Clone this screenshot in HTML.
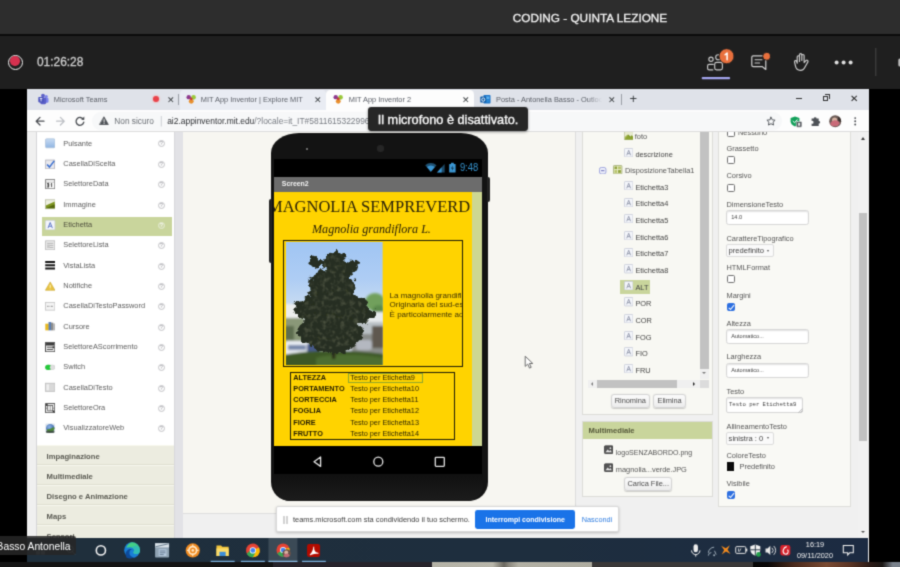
<!DOCTYPE html>
<html>
<head>
<meta charset="utf-8">
<title>Teams - CODING - QUINTA LEZIONE</title>
<style>
*{box-sizing:border-box;margin:0;padding:0}
html,body{width:900px;height:567px;overflow:hidden;background:#000}
body{font-family:"Liberation Sans",sans-serif;position:relative;color:#444}
.a{position:absolute}
#stage{position:absolute;left:0;top:0;width:900px;height:567px;overflow:hidden;background:#000;filter:url(#soft)}
/* ---------- Teams chrome ---------- */
#tb1{left:0;top:0;width:900px;height:34.5px;background:#2d2d2d}
#tb1 .ttl{left:512px;top:11px;width:156px;text-align:center;font-size:11.8px;line-height:15px;color:#f4f4f4;white-space:nowrap;letter-spacing:0;-webkit-text-stroke:0.3px #f4f4f4}
#tbl{left:0;top:34.4px;width:900px;height:1.7px;background:#0b0b0b}
#tb2{left:0;top:36px;width:900px;height:53px;background:#1f1f1f}
#rec{left:8.4px;top:54.6px;width:15px;height:15px;border-radius:50%;border:1.9px solid #f1f1f1;background:#1f1f1f}
#rec i{position:absolute;left:0.9px;top:0.9px;width:9.4px;height:9.4px;border-radius:50%;background:#d6314f}
#tim{left:37px;top:55px;font-size:11.9px;line-height:15px;color:#cdcdcd;white-space:nowrap;-webkit-text-stroke:0.3px #cdcdcd}
/* ---------- Shared screen ---------- */
#scr{left:27px;top:89px;width:841.6px;height:473px;background:#f1f1f1;overflow:hidden}
#tabs{left:0;top:0;width:842px;height:21px;background:#dfe2e9}
#tool{left:0;top:21px;width:842px;height:22px;background:#fdfdfd;border-bottom:1px solid #dcdcdc}
.tabtx{font-size:7.4px;line-height:10px;color:#5a5e66;white-space:nowrap;top:5.8px}
.tabx{font-size:9px;line-height:10px;color:#3c4043;top:5.6px}
#page{left:0;top:43px;width:842px;height:406px;background:#f0f0f0;overflow:hidden}
/* palette */
#pal{left:9px;top:-2px;width:139px;height:420px;background:#fff;border-left:1.5px solid #d5d5d8;border-right:1px solid #d8d8dc}
.pi{position:absolute;left:0;width:137px;height:19.1px}
.pi .tx{position:absolute;left:26.3px;top:2.7px;font-size:7.4px;line-height:10px;color:#5c5c5c;white-space:nowrap}
.pi .ic{position:absolute;left:8px;top:2.4px;width:10.4px;height:10.4px}
.pi .q{position:absolute;left:121px;top:4.6px;width:7px;height:7px;border-radius:50%;border:0.8px solid #c4c4c8;font-size:5px;line-height:5.6px;text-align:center;color:#9a9aa0;background:#fbfbfb}
.pi.sel{background:#c9d59c;left:5.2px;width:129.6px}
.pi.sel .tx{left:21.1px;color:#4d4d3c}.pi.sel .ic{left:3.3px}.pi.sel .q{left:115.8px;border-color:#e4ead0;color:#fff;background:#cfd9aa}
.ph{position:absolute;left:0;width:137px;height:20px;overflow:hidden;background:#ecece0;border-top:1px solid #f7f7ee;border-bottom:1px solid #dfdfd0;font-size:7.65px;font-weight:bold;color:#5a5a52;line-height:21px;padding-left:9.6px;white-space:nowrap}
/* viewer */
#gut{left:148px;top:0;width:8px;height:420px;background:#e2e2e6}
#view{left:156px;top:-2px;width:393px;height:384px;background:#f7f6f1;border-right:1px solid #dcdcdc;border-bottom:1px solid #dedede}

/* phone */
#ph{left:88px;top:2.8px;width:217.3px;height:368.4px;background:#131313;border-radius:28px 27px 19px 19px / 20px 20px 19px 19px}
#ph .sb{position:absolute;background:#222}
#phs{left:91px;top:29px;width:207.7px;height:315px;background:#000;overflow:hidden}
#phs .tbar{left:0;top:18px;width:208.5px;height:14.6px;background:#6c6c6c}
#phs .tbar span{position:absolute;left:7.8px;top:2.4px;font-size:6.9px;line-height:10px;font-weight:bold;color:#f4f4f4}
#ycl{left:0;top:32.6px;width:198px;height:254.4px;background:#ffd300;overflow:hidden}
#gst{left:198px;top:32.6px;width:9.7px;height:254.4px;background:#cdd792}
.ser{font-family:"Liberation Serif",serif;color:#2a2208;white-space:nowrap}
.ptx{font-size:8px;line-height:9.4px;color:#3e3304;white-space:nowrap}
.tl{position:absolute;font-size:7.32px;line-height:10px;color:#2e2603;white-space:nowrap;margin-top:0.5px}
.tl.b{font-weight:bold;color:#241d02}

/* right panels */
#cmp{left:555px;top:-2px;width:131px;height:284.5px;background:#f8f8f3;border:1px solid #dcdcd8;border-top:none;overflow:hidden}
.ti{position:absolute;margin-top:0.4px;font-size:7.4px;line-height:10px;color:#555;white-space:nowrap}
.tic{position:absolute;width:9.4px;height:9.4px}
.btn{position:absolute;height:14.4px;border:1px solid #d4d4d4;border-radius:3px;background:linear-gradient(#fbfbfb,#ececec);font-size:7.4px;line-height:12.4px;text-align:center;color:#4a4a4a;box-shadow:0 0.5px 1px rgba(0,0,0,.18)}
#med{left:555px;top:288.5px;width:131px;height:76px;background:#f8f8f3;border:1px solid #dcdcd8}
#med .hd{position:absolute;left:0;top:0;width:129px;height:17.6px;background:#c9d59c;font-size:7.6px;font-weight:bold;line-height:17px;padding-left:5.6px;color:#55583a}
#prp{left:691px;top:-2px;width:133px;height:377px;background:#f9f9f5;border:1px solid #dededa;border-top:none;overflow:hidden}
.pl{position:absolute;left:7.5px;margin-top:0.7px;font-size:7.4px;line-height:10px;color:#555;white-space:nowrap}
.cb{position:absolute;left:7.6px;width:8.4px;height:8.4px;border:1px solid #6f6f6f;border-radius:1.6px;background:#fff}
.cb.on{background:#2d6fe0;border-color:#2d6fe0}
.cb.on:after{content:"";position:absolute;left:2.2px;top:0.2px;width:2.4px;height:4.6px;border:solid #fff;border-width:0 1.2px 1.2px 0;transform:rotate(40deg)}
.tb{position:absolute;left:6.6px;width:83.6px;height:15px;border:1px solid #d6d6d6;border-radius:2.6px;background:#fff;box-shadow:inset 0 1px 1.5px rgba(0,0,0,.12);font-size:5.6px;line-height:13px;padding-left:4.6px;color:#444;white-space:nowrap;overflow:hidden}
.sl{position:absolute;left:6.6px;width:48px;height:13.2px;border:1px solid #dcdcdc;border-radius:2px;background:#fafafa;font-size:7.6px;line-height:11.2px;padding-left:2px;color:#444;white-space:nowrap}
.sl:after{content:"";position:absolute;right:3.4px;top:4.6px;border:1.5px solid transparent;border-top:2.2px solid #555}
#vsb{left:831.4px;top:0;width:10.6px;height:406px;background:#f1f1f1}
</style>
</head>
<body>
<svg width="0" height="0" style="position:absolute"><defs><filter id="soft" x="0" y="0" width="100%" height="100%" color-interpolation-filters="sRGB"><feConvolveMatrix order="3" kernelMatrix="0.062 0.249 0.062 0.249 1 0.249 0.062 0.249 0.062" edgeMode="duplicate" preserveAlpha="true"/></filter></defs></svg>
<div id="stage">
  <!-- Teams top -->
  <div id="tb1" class="a"><div class="a ttl">CODING - QUINTA LEZIONE</div></div>
  <div id="tbl" class="a"></div>
  <div id="tb2" class="a"></div>
  <div id="rec" class="a"><i></i></div>
  <div id="tim" class="a">01:26:28</div>
  <svg class="a" style="left:690px;top:40px" width="210" height="50" viewBox="690 40 210 50" fill="none" stroke-linecap="round" stroke-linejoin="round">
    <!-- people -->
    <g stroke="#c9c9c9" stroke-width="1.15">
      <circle cx="711" cy="59.300" r="2.150"/>
      <path d="M713.300 64.300h-4.100a1.600 1.600 0 0 0-1.600 1.600v2.400a1.600 1.600 0 0 0 1.600 1.600h3.600"/>
      <circle cx="718.200" cy="57.200" r="2.500"/>
      <rect x="714.700" y="62.300" width="7.700" height="7.600" rx="1.900"/>
    </g>
    <circle cx="726.600" cy="56.200" r="7.500" fill="#e9703d" stroke="#1f1f1f" stroke-width="0.800"/>
    <path d="M725.100 54.800l2-1.700v6.700" stroke="#fff" stroke-width="1.500"/>
    <rect x="701.700" y="77.100" width="28.400" height="2.100" rx="1" fill="#a3a5ee" stroke="none"/>
    <!-- chat -->
    <g stroke="#cfcfcf" stroke-width="1.2">
      <path d="M753.2 55.9h11.2a1.4 1.4 0 0 1 1.4 1.4v12.2l-3.4-2.8h-9.2a1.4 1.4 0 0 1-1.4-1.4v-8a1.4 1.4 0 0 1 1.4-1.4z"/>
      <path d="M755 59.700h7M755 62.900h4.600" stroke-width="1.050"/>
    </g>
    <circle cx="766.6" cy="56.3" r="3.9" fill="#e9703d" stroke="#1f1f1f" stroke-width="0.9"/>
    <!-- hand -->
    <g stroke="#cfcfcf" stroke-width="1.15">
      <path d="M797.2 63.2v-6.3a1.15 1.15 0 0 1 2.3 0v4.6M799.5 60.4v-5.6a1.15 1.15 0 0 1 2.3 0v5.6M801.8 60.4v-4.8a1.15 1.15 0 0 1 2.3 0v5.8M804.1 62.6l2-2.2a1.2 1.2 0 0 1 1.8 1.5l-2.6 4.6c-1 2.4-2.4 3.9-4.9 3.9-2.8 0-4.4-1.8-4.9-4.2l-1-4.3a1.1 1.1 0 0 1 2.1-.6l.6 1.9"/>
    </g>
    <!-- more -->
    <g fill="#dedede" stroke="none"><circle cx="836.6" cy="62.6" r="2"/><circle cx="843.6" cy="62.6" r="2"/><circle cx="850.6" cy="62.6" r="2"/></g>
    <rect x="875.3" y="48" width="1" height="28" fill="#474747" stroke="none"/>
    <rect x="898.3" y="58.5" width="3" height="8" rx="1.5" fill="#bdbdbd" stroke="none"/>
  </svg>

  <!-- Shared screen -->
  <div id="scr" class="a">
    <div id="tabs" class="a">
      <!-- tab1 Teams -->
      <svg class="a" style="left:11px;top:4px" width="11" height="12" viewBox="0 0 11 12"><circle cx="8.3" cy="3.4" r="1.5" fill="#7b83eb"/><circle cx="5" cy="2.6" r="1.9" fill="#5b5fc7"/><rect x="6.2" y="4.8" width="4.3" height="5" rx="1.2" fill="#7b83eb"/><rect x="2.2" y="4.6" width="6" height="6.6" rx="1.4" fill="#5b5fc7"/><rect x="0.3" y="4" width="5.4" height="5.4" rx="0.8" fill="#4b53bc"/><path d="M1.8 5.5h2.5M3.05 5.5v2.9" stroke="#fff" stroke-width="0.8"/></svg>
      <div class="a tabtx" style="left:26.8px">Microsoft Teams</div>
      <div class="a" style="left:126px;top:7.4px;width:6px;height:6px;border-radius:50%;background:#e8424a;box-shadow:0 0 1.5px 0.8px #f0b8ba"></div>
      <div class="a tabx" style="left:139.7px">✕</div>
      <div class="a" style="left:151.4px;top:5px;width:1px;height:11px;background:#9a9ea6"></div>
      <!-- tab2 hover -->
      <div class="a" style="left:152.5px;top:1px;width:146px;height:20px;background:#e9ecf3;border-radius:4px 4px 0 0"></div>
      <svg class="a mitf" style="left:159px;top:4.5px" width="10.5" height="10.5" viewBox="0 0 10 10"><circle cx="2.6" cy="3" r="2.1" fill="#8e3a8e"/><circle cx="7.2" cy="3.2" r="2.2" fill="#9ac93a"/><circle cx="5" cy="7" r="2.3" fill="#e8902e"/><circle cx="5" cy="4.6" r="1.3" fill="#c63a3a"/></svg>
      <div class="a tabtx" style="left:173.8px">MIT App Inventor | Explore MIT</div>
      <div class="a tabx" style="left:287px">✕</div>
      <!-- tab3 active -->
      <div class="a" style="left:299px;top:1px;width:148px;height:20px;background:#fdfdfd;border-radius:4.5px 4.5px 0 0"></div>
      <svg class="a mitf" style="left:306px;top:4.5px" width="10.5" height="10.5" viewBox="0 0 10 10"><circle cx="2.6" cy="3" r="2.1" fill="#8e3a8e"/><circle cx="7.2" cy="3.2" r="2.2" fill="#9ac93a"/><circle cx="5" cy="7" r="2.3" fill="#e8902e"/><circle cx="5" cy="4.6" r="1.3" fill="#c63a3a"/></svg>
      <div class="a tabtx" style="left:321.8px">MIT App Inventor 2</div>
      <div class="a tabx" style="left:434.6px">✕</div>
      <!-- tab4 outlook -->
      <svg class="a" style="left:453px;top:4.5px" width="11" height="11" viewBox="0 0 11 11"><rect x="3.5" y="1" width="7" height="8.6" rx="0.8" fill="#1a73c8"/><rect x="5.4" y="2.4" width="4" height="2.6" fill="#5ab0ee"/><rect x="5.4" y="5.2" width="4" height="3" fill="#2a8ad8"/><rect x="0.3" y="2.6" width="6" height="6" rx="0.9" fill="#0f5ca8"/><ellipse cx="3.3" cy="5.6" rx="1.5" ry="1.7" fill="none" stroke="#fff" stroke-width="0.9"/></svg>
      <div class="a tabtx" style="left:469px;width:106px;overflow:hidden;-webkit-mask-image:linear-gradient(90deg,#000 86%,transparent)">Posta - Antonella Basso - Outlook</div>
      <div class="a tabx" style="left:581.3px">✕</div>
      <div class="a" style="left:594.3px;top:5px;width:1px;height:11px;background:#9a9ea6"></div>
      <div class="a" style="left:602.5px;top:2.5px;font-size:13px;line-height:14px;color:#3c4043">+</div>
      <!-- window controls -->
      <div class="a" style="left:768.5px;top:9px;width:6px;height:1px;background:#333"></div>
      <div class="a" style="left:796.2px;top:6.5px;width:5.2px;height:5.2px;border:1px solid #333"></div>
      <div class="a" style="left:797.6px;top:5.2px;width:5.2px;height:5.2px;border-top:1px solid #333;border-right:1px solid #333"></div>
      <div class="a" style="left:823.2px;top:3.5px;font-size:9.5px;line-height:11px;color:#222">✕</div>
</div>
    <div id="tool" class="a">
      <svg class="a" style="left:0;top:0" width="841" height="22" viewBox="27 110 841 22" fill="none" stroke-linecap="round" stroke-linejoin="round">
        <rect x="92" y="111.8" width="690" height="18.6" rx="9.3" fill="#f7f8f9" stroke="none"/>
        <path d="M44 121.2h-7.6M40 117.4l-3.8 3.8 3.8 3.8" stroke="#4a4d52" stroke-width="1.25"/>
        <path d="M56.6 121.2h7.6M60.4 117.4l3.8 3.8-3.8 3.8" stroke="#bcbfc4" stroke-width="1.25"/>
        <path d="M83.3 119.3a3.9 3.9 0 1 0 .5 2.9" stroke="#4a4d52" stroke-width="1.3"/>
        <path d="M84.3 116.6v3.1h-3.1z" fill="#4a4d52" stroke="none"/>
        <path d="M104.1 117.1l4.2 7.4h-8.4z" fill="#4d5156" stroke="#4d5156" stroke-width="0.8"/>
        <path d="M104.1 119.6v2.4M104.1 123.2v.3" stroke="#fff" stroke-width="0.9"/>
        <rect x="160.8" y="116" width="0.9" height="10.5" fill="#c8cbd0" stroke="none"/>
        <!-- star -->
        <path d="M771 117.2l1.25 2.6 2.85.4-2.05 2 .5 2.85-2.55-1.35-2.55 1.35.5-2.85-2.05-2 2.85-.4z" stroke="#50545a" stroke-width="0.95"/>
        <!-- shield -->
        <path d="M795 116.4l4.4 1.5v3.4c0 2.5-1.9 4.3-4.4 5.1-2.5-.8-4.4-2.6-4.4-5.1v-3.4z" fill="#12a05a" stroke="none"/>
        <path d="M793 121.2l1.5 1.5 2.7-2.9" stroke="#fff" stroke-width="1"/>
        <rect x="796.3" y="121.4" width="5.6" height="5.8" rx="1" fill="#55595e" stroke="#fff" stroke-width="0.5"/>
        <rect x="798.1" y="122.9" width="2" height="2.8" fill="#e8e8e8" stroke="none"/>
        <!-- puzzle -->
        <path d="M811.6 118.6h2.1a1.45 1.45 0 1 1 2.9 0h2.1v2.3a1.45 1.45 0 1 1 0 2.9v2.3h-7.1v-2.5a1.4 1.4 0 1 0 0-2.6z" fill="#4e5257" stroke="none"/>
        <!-- avatar -->
        <circle cx="835.2" cy="121.3" r="6" fill="#6a5a55" stroke="none"/>
        <circle cx="834.6" cy="120" r="2.6" fill="#d5b3a2" stroke="none"/>
        <path d="M830.2 124.4a5 5 0 0 1 9.6-1 6 6 0 0 1-9.6 1z" fill="#c96a78" stroke="none"/>
        <path d="M838.2 116.5a6 6 0 0 1 2.9 5.6l-3-1.2z" fill="#3a302e" stroke="none"/>
        <g fill="#4a4d52" stroke="none"><circle cx="855.2" cy="118.1" r="0.95"/><circle cx="855.2" cy="121.3" r="0.95"/><circle cx="855.2" cy="124.5" r="0.95"/></g>
      </svg>
      <div class="a" style="left:87.3px;top:6px;font-size:8.3px;line-height:11px;color:#6a6e74;white-space:nowrap">Non sicuro</div>
      <div class="a" style="left:140.2px;top:6px;font-size:8.44px;line-height:11px;color:#303236;white-space:nowrap">ai2.appinventor.mit.edu<span style="color:#777b82">/?locale=it_IT#5811615322996224</span></div>
</div>
    <div id="page" class="a">
      <div id="pal" class="a">
        <div class="pi" style="top:5.9px"><svg class="ic" viewBox="0 0 10 10"><defs><linearGradient id="gb" x1="0" y1="0" x2="0" y2="1"><stop offset="0" stop-color="#c9dcf3"/><stop offset="1" stop-color="#8fb4e2"/></linearGradient></defs><rect x="0.5" y="0.8" width="9" height="8.6" rx="1" fill="url(#gb)" stroke="#a9bfd8" stroke-width="0.7"/></svg><span class="tx">Pulsante</span><span class="q">?</span></div>
        <div class="pi" style="top:26.25px"><svg class="ic" viewBox="0 0 10 10"><rect x="0.6" y="1" width="8.6" height="8.4" fill="#e9e9ee" stroke="#b4b4bc" stroke-width="0.8"/><path d="M2 5.2l2.3 2.6 4.6-6" fill="none" stroke="#3a6fd0" stroke-width="1.5"/></svg><span class="tx">CasellaDiScelta</span><span class="q">?</span></div>
        <div class="pi" style="top:46.6px"><svg class="ic" viewBox="0 0 10 10"><rect x="0.6" y="0.6" width="8.800" height="8.800" fill="#fff" stroke="#777" stroke-width="0.900"/><path d="M0.600 3h8.800M3.200 3v6.400" stroke="#999" stroke-width="0.600"/><path d="M2 4.400h1.600v1.400h-1.600M3.600 5.800v1.800h-1.800M6.400 4.200v3.600M5.600 5l.800-.800" stroke="#222" stroke-width="0.800" fill="none"/></svg><span class="tx">SelettoreData</span><span class="q">?</span></div>
        <div class="pi" style="top:66.95px"><svg class="ic" viewBox="0 0 10 10"><rect x="0.4" y="0.800" width="9.400" height="8.600" fill="#eef0e2" stroke="#a8ac8c" stroke-width="0.600"/><path d="M0.800 9V6.200L9.400 2.400V9z" fill="#7d9420"/><path d="M0.800 9l8.600-4V9z" fill="#55680e"/></svg><span class="tx">Immagine</span><span class="q">?</span></div>
        <div class="pi sel" style="top:87.3px"><svg class="ic" viewBox="0 0 10 10"><rect x="0.5" y="0.5" width="9" height="9" rx="0.8" fill="#f4f6fb" stroke="#cfd3e2" stroke-width="0.7"/><path d="M2.9 7.8L5 2.4l2.1 5.4M3.7 6h2.6" fill="none" stroke="#5d78c8" stroke-width="0.95"/></svg><span class="tx">Etichetta</span><span class="q">?</span></div>
        <div class="pi" style="top:107.65px"><svg class="ic" viewBox="0 0 10 10"><rect x="0.6" y="0.8" width="8.8" height="8.6" fill="#ececec" stroke="#b8b8b8" stroke-width="0.8"/><path d="M2 3.2h6M2 5.2h6M2 7.2h6" stroke="#a8a8a8" stroke-width="0.8"/><rect x="2" y="4.4" width="2.4" height="3.4" fill="#c8c8c8"/></svg><span class="tx">SelettoreLista</span><span class="q">?</span></div>
        <div class="pi" style="top:128.0px"><svg class="ic" viewBox="0 0 10 10"><path d="M0.2 2h9.6M0.2 5.1h9.6M0.2 8.2h9.6" stroke="#161616" stroke-width="1.9"/></svg><span class="tx">VistaLista</span><span class="q">?</span></div>
        <div class="pi" style="top:148.35px"><svg class="ic" viewBox="0 0 10 10"><path d="M5 0.9l4.6 8H0.4z" fill="#e8c341" stroke="#c9a62e" stroke-width="0.6"/><path d="M5 3.6v3M5 7.5v.5" stroke="#fff6d0" stroke-width="0.9"/></svg><span class="tx">Notifiche</span><span class="q">?</span></div>
        <div class="pi" style="top:168.7px"><svg class="ic" viewBox="0 0 10 10"><rect x="0.5" y="1.4" width="9" height="7.4" fill="#f4f4f4" stroke="#c4c4c4" stroke-width="0.8"/><path d="M2.2 5.2h2M5.6 5.2h2" stroke="#888" stroke-width="1.3" stroke-dasharray="0.9 0.5"/></svg><span class="tx">CasellaDiTestoPassword</span><span class="q">?</span></div>
        <div class="pi" style="top:189.05px"><svg class="ic" viewBox="0 0 10 10"><rect x="0.3" y="2.6" width="3.4" height="6.4" fill="#e8b820"/><rect x="3.4" y="1" width="2.6" height="8" fill="#5b7fb4"/><rect x="5.8" y="1.6" width="2.2" height="7.4" fill="#8a8a8a"/><rect x="7.8" y="2.4" width="2" height="6.6" fill="#b4b4b4"/></svg><span class="tx">Cursore</span><span class="q">?</span></div>
        <div class="pi" style="top:209.4px"><svg class="ic" viewBox="0 0 10 10"><rect x="0.5" y="0.6" width="9" height="8.8" fill="#f4f4f4" stroke="#444" stroke-width="0.9"/><rect x="1" y="1" width="8" height="2.4" fill="#3a3a3a"/><path d="M1.8 5h5M1.8 7.2h6" stroke="#444" stroke-width="0.9"/><rect x="7" y="4.2" width="2" height="1.8" fill="#333"/></svg><span class="tx">SelettoreAScorrimento</span><span class="q">?</span></div>
        <div class="pi" style="top:229.75px"><svg class="ic" viewBox="0 0 10 10"><rect x="0.2" y="2.6" width="9.6" height="5" rx="2.5" fill="#cfcfcf"/><rect x="0.2" y="2.6" width="6" height="5" rx="2.5" fill="#25c93b"/><circle cx="7" cy="5.1" r="2.3" fill="#dedede"/></svg><span class="tx">Switch</span><span class="q">?</span></div>
        <div class="pi" style="top:250.1px"><svg class="ic" viewBox="0 0 10 10"><rect x="0.5" y="1.2" width="9" height="7.8" fill="#d9d9d9" stroke="#bdbdbd" stroke-width="0.8"/><rect x="1.4" y="2.2" width="2.4" height="5.8" fill="#efefef"/></svg><span class="tx">CasellaDiTesto</span><span class="q">?</span></div>
        <div class="pi" style="top:270.45px"><svg class="ic" viewBox="0 0 10 10"><rect x="0.6" y="0.6" width="8.8" height="8.8" fill="#fff" stroke="#444" stroke-width="0.9"/><rect x="2.6" y="2.4" width="4.8" height="5.2" fill="none" stroke="#555" stroke-width="0.8"/><path d="M0.6 5h2M7.4 5h2M5 2.4v5.2" stroke="#666" stroke-width="0.7"/><rect x="1" y="1" width="1.6" height="1.8" fill="#333"/><rect x="7.4" y="7.2" width="1.6" height="1.8" fill="#333"/></svg><span class="tx">SelettoreOra</span><span class="q">?</span></div>
        <div class="pi" style="top:290.8px"><svg class="ic" viewBox="0 0 10 10"><defs><radialGradient id="gw" cx=".4" cy=".35" r=".7"><stop offset="0" stop-color="#8fb6e8"/><stop offset="1" stop-color="#2f5aa0"/></radialGradient></defs><rect x="0.3" y="0.6" width="9.4" height="8.8" rx="1" fill="#dfe6ee"/><circle cx="5" cy="5" r="4" fill="url(#gw)"/><path d="M1.6 6.6c1.4-1.4 3.4-.4 4.6-1.6 1-.8 1.6-.4 2.6-1.2a4 4 0 0 1-7 3.6z" fill="#4f8a3a"/><path d="M1 7.4h8v1.6a1 1 0 0 1-1 .6H2a1 1 0 0 1-1-.6z" fill="#3c4a40" opacity=".85"/></svg><span class="tx">VisualizzatoreWeb</span><span class="q">?</span></div>
        <div class="ph" style="top:314.6px">Impaginazione</div>
        <div class="ph" style="top:334.6px">Multimediale</div>
        <div class="ph" style="top:354.6px">Disegno e Animazione</div>
        <div class="ph" style="top:374.6px">Maps</div>
        <div class="ph" style="top:394.6px">Sensori</div>
      </div>
      <div id="gut" class="a"></div>
      <div id="view" class="a">
        <div id="ph" class="a">
          <div class="sb" style="left:-2px;top:66px;width:3px;height:64px;border-radius:2px 0 0 2px"></div>
          <div class="sb" style="left:216.4px;top:44px;width:3px;height:25px;border-radius:0 2px 2px 0"></div>
          <div class="a" style="left:34.6px;top:15.2px;width:2px;height:2px;border-radius:50%;background:#8a8a8a"></div>
          <div class="a" style="left:106px;top:12.6px;width:6.6px;height:6.6px;border-radius:50%;background:#262626"></div>
          <div class="a" style="left:3px;top:341px;width:208.5px;height:27px;background:linear-gradient(#101010,#1c1c1c);border-radius:0 0 16px 16px"></div>
        </div>
        <div id="phs" class="a">
          <svg class="a" style="left:150px;top:2px" width="58" height="14" viewBox="424 161 58 14" fill="#3b96d2">
            <path d="M425.2 165.2a8.2 8.2 0 0 1 11.3 0l-5.65 6.6z" opacity=".55"/>
            <path d="M426.9 167.1a5.8 5.8 0 0 1 7.9 0l-3.95 4.7z"/>
            <path d="M437 172.4l7.6-8.4v8.4z" opacity=".5"/><path d="M437 172.4l4.6-5.1v5.1z"/>
            <rect x="449.2" y="164" width="6.4" height="8.6" rx="0.6"/><rect x="451" y="162.8" width="2.8" height="1.6"/>
            <path d="M452.9 165.6l-2 3h1.5l-.6 2.4 2.1-3.2h-1.5z" fill="#0a2a40"/>
          </svg>
          <div class="a" style="left:185.9px;top:3.4px;font-size:9.4px;line-height:11px;color:#3592cd;white-space:nowrap;transform:scaleY(1.14);transform-origin:50% 85%">9:48</div>
          <div class="a tbar"><span>Screen2</span></div>
          <div id="ycl" class="a">
            <div class="a" style="left:0;top:5.4px;width:196.2px;height:20px;overflow:hidden"><div class="a ser" style="left:-6px;top:0;font-size:16.5px;line-height:19px">MAGNOLIA SEMPREVERDE</div></div>
            <div class="a ser" style="left:38px;top:30.1px;font-size:12.13px;line-height:14px;font-style:italic">Magnolia grandiflora L.</div>
            <div class="a" style="left:9.2px;top:48.5px;width:180px;height:127.3px;border:1.2px solid #1d1a08;overflow:hidden">
              <div class="a ptx" style="left:105.4px;top:49.7px">La magnolia grandiflora è un albero<br>Originaria del sud-est degli Stati Uniti<br>È particolarmente adatta come</div>
            </div>
            <svg class="a" style="left:12.3px;top:50.7px" width="96.8" height="123.2" viewBox="0 0 96.8 123.2" preserveAspectRatio="none">
  <defs>
    <linearGradient id="sky" x1="0" y1="0" x2="0" y2="1"><stop offset="0" stop-color="#a0c5f3"/><stop offset=".3" stop-color="#aecdf4"/><stop offset=".5" stop-color="#c6daf2"/><stop offset=".62" stop-color="#dbe5ee"/><stop offset=".8" stop-color="#dfe4e4"/></linearGradient>
    <filter id="bl" x="-20%" y="-20%" width="140%" height="140%"><feGaussianBlur stdDeviation="1.2"/></filter>
    <filter id="rough" x="-10%" y="-10%" width="120%" height="120%">
      <feTurbulence type="fractalNoise" baseFrequency="0.16" numOctaves="3" seed="7" result="n"/>
      <feDisplacementMap in="SourceGraphic" in2="n" scale="11" xChannelSelector="R" yChannelSelector="G" result="d"/>
      <feGaussianBlur in="d" stdDeviation="0.7"/>
    </filter>
    <filter id="tex" x="0" y="0" width="100%" height="100%">
      <feTurbulence type="fractalNoise" baseFrequency="0.22" numOctaves="2" seed="3" result="n"/>
      <feColorMatrix in="n" type="matrix" values="0 0 0 0 0.30  0 0 0 0 0.31  0 0 0 0 0.19  2.2 0 0 0 -1.0" result="c"/>
      <feComposite in="c" in2="SourceAlpha" operator="in"/>
      <feGaussianBlur stdDeviation="0.6"/>
    </filter>
    <clipPath id="pc"><rect width="96.8" height="123.2"/></clipPath>
  </defs>
  <g clip-path="url(#pc)">
  <rect width="96.8" height="123.2" fill="url(#sky)"/>
  <g filter="url(#bl)">
    <rect x="-2" y="62" width="17" height="16" fill="#eceeed"/>
    <rect x="-2" y="76" width="20" height="26" fill="#8a9878"/>
    <rect x="-2" y="84" width="10" height="14" fill="#5d6d50"/>
    <ellipse cx="89" cy="60" rx="10" ry="9" fill="#71a05c"/>
    <ellipse cx="93" cy="69" rx="7" ry="6" fill="#5b8a4e"/>
    <rect x="72" y="70" width="26" height="10" fill="#e6eaec"/>
    <rect x="64" y="80" width="34" height="16" fill="#b9c0c4"/>
    <rect x="60" y="92" width="38" height="20" fill="#8a8d8a"/>
    <rect x="86" y="84" width="12" height="22" fill="#5f5850"/>
    <rect x="-2" y="99" width="25" height="13" rx="4" fill="#e9edf3"/>
    <rect x="2" y="103" width="18" height="5" fill="#7889ab"/>
    <rect x="21" y="101" width="13" height="10" rx="3" fill="#465a8a"/>
    <rect x="52" y="100" width="14" height="10" rx="3" fill="#c9cfda"/>
    <rect x="70" y="98" width="16" height="10" rx="3" fill="#b4b8c0"/>
    <path d="M-2 113 C20 108 60 107 98 112 V125 H-2z" fill="#3c5828"/>
    <path d="M30 116 C50 111 75 112 98 116 V125 H30z" fill="#4e6d32"/>
    <rect x="46.200" y="104" width="3" height="13" fill="#251f17"/>
  </g>
  <g filter="url(#rough)">
    <g fill="#262f20">
      <ellipse cx="49" cy="22" rx="11" ry="13"/>
      <ellipse cx="31" cy="20" rx="8" ry="5" transform="rotate(35 31 20)"/>
      <ellipse cx="62" cy="26" rx="10" ry="6" transform="rotate(-35 62 26)"/>
      <ellipse cx="46" cy="44" rx="24" ry="17"/>
      <ellipse cx="47" cy="68" rx="36" ry="20"/>
      <ellipse cx="78" cy="74" rx="11" ry="7"/>
      <ellipse cx="18" cy="66" rx="11" ry="8"/>
      <ellipse cx="44" cy="90" rx="33" ry="18"/>
      <ellipse cx="46" cy="103" rx="22" ry="8"/>
    </g>
  </g>
  <g filter="url(#tex)" opacity=".38" clip-path="url(#pc)">
      <ellipse cx="49" cy="24" rx="11" ry="14"/>
      <ellipse cx="46" cy="46" rx="22" ry="16"/>
      <ellipse cx="47" cy="70" rx="33" ry="18"/>
      <ellipse cx="44" cy="92" rx="29" ry="15"/>
  </g>
  </g>
</svg>
            <div class="a" style="left:16.4px;top:180.0px;width:164.2px;height:68px;border:1.2px solid #1d1a08"></div>
            <div class="a" style="left:74.2px;top:181.0px;width:74.6px;height:10.2px;border:1px solid #8ea62c"></div>
            <span class="tl b" style="left:19.3px;top:181.1px">ALTEZZA</span><span class="tl" style="left:76.3px;top:181.1px">Testo per Etichetta9</span><span class="tl b" style="left:19.3px;top:192.2px">PORTAMENTO</span><span class="tl" style="left:76.3px;top:192.2px">Testo per Etichetta10</span><span class="tl b" style="left:19.3px;top:203.3px">CORTECCIA</span><span class="tl" style="left:76.3px;top:203.3px">Testo per Etichetta11</span><span class="tl b" style="left:19.3px;top:214.4px">FOGLIA</span><span class="tl" style="left:76.3px;top:214.4px">Testo per Etichetta12</span><span class="tl b" style="left:19.3px;top:225.5px">FIORE</span><span class="tl" style="left:76.3px;top:225.5px">Testo per Etichetta13</span><span class="tl b" style="left:19.3px;top:236.6px">FRUTTO</span><span class="tl" style="left:76.3px;top:236.6px">Testo per Etichetta14</span>
          </div>
          <div id="gst" class="a"></div>
          <svg class="a" style="left:0;top:287px" width="208.5" height="28" viewBox="274 446 208.5 28" fill="none" stroke="#e4e4e4" stroke-width="1.3" stroke-linejoin="round">
            <path d="M320.6 457l-6.6 4.7 6.6 4.7z"/><circle cx="378.3" cy="461.7" r="4.5"/><rect x="435.3" y="457.3" width="9" height="9" rx="0.8"/>
          </svg>
        </div>
</div>
      <div id="cmp" class="a"><div class="a" style="left:37px;top:149.6px;width:30px;height:14.6px;background:#c9d59c"></div><svg class="tic" style="left:40.6px;top:0.5px" viewBox="0 0 10 10"><rect x="0.4" y="0.8" width="9.4" height="8.6" fill="#e8ecd0" stroke="#b0b48c" stroke-width="0.6"/><path d="M0.8 9l4-5.2 2 2.2 1.4-1.4 1.4 1.6V9z" fill="#6f8a1e"/><path d="M0.8 9V6.4l3-2.6 2.4 2.6 3.2-1.4V9z" fill="#93a934" opacity=".8"/></svg><span class="ti" style="left:51.8px;top:1.9px">foto</span><svg class="tic" style="left:40.9px;top:17.6px" viewBox="0 0 10 10"><rect x="0.5" y="0.5" width="9" height="9" rx="0.8" fill="#f4f6fb" stroke="#c4c8d6" stroke-width="0.8"/><path d="M2.9 7.8L5 2.4l2.1 5.4M3.7 6h2.6" fill="none" stroke="#8a90a4" stroke-width="0.9"/></svg><span class="ti" style="color:#444;left:52.4px;top:19.2px">descrizione</span><svg class="a" style="left:16.2px;top:36.7px" width="7.4" height="7.4" viewBox="0 0 8 8"><rect x="0.5" y="0.5" width="7" height="7" rx="2" fill="#eef0fa" stroke="#8f96d8" stroke-width="0.9"/><path d="M2.2 4h3.6" stroke="#5a60b0" stroke-width="1"/></svg><svg class="tic" style="left:30.2px;top:34.9px" viewBox="0 0 10 10"><rect x="0.5" y="0.5" width="9" height="9" rx="0.8" fill="#e9edc8" stroke="#9aa66a" stroke-width="0.8"/><rect x="1.6" y="1.6" width="2.8" height="2.8" fill="#8fa23c"/><rect x="5.4" y="1.6" width="3" height="2.8" fill="#b7c46a"/><rect x="1.6" y="5.4" width="2.8" height="3" fill="#b7c46a"/><rect x="5.4" y="5.4" width="3" height="3" fill="#8fa23c"/></svg><span class="ti" style="left:42px;top:35.7px">DisposizioneTabella1</span><svg class="tic" style="left:40.9px;top:51.0px" viewBox="0 0 10 10"><rect x="0.5" y="0.5" width="9" height="9" rx="0.8" fill="#f4f6fb" stroke="#c4c8d6" stroke-width="0.8"/><path d="M2.9 7.8L5 2.4l2.1 5.4M3.7 6h2.6" fill="none" stroke="#8a90a4" stroke-width="0.9"/></svg><span class="ti" style="color:#444;left:52.4px;top:52.6px">Etichetta3</span><svg class="tic" style="left:40.9px;top:67.5px" viewBox="0 0 10 10"><rect x="0.5" y="0.5" width="9" height="9" rx="0.8" fill="#f4f6fb" stroke="#c4c8d6" stroke-width="0.8"/><path d="M2.9 7.8L5 2.4l2.1 5.4M3.7 6h2.6" fill="none" stroke="#8a90a4" stroke-width="0.9"/></svg><span class="ti" style="color:#444;left:52.4px;top:69.1px">Etichetta4</span><svg class="tic" style="left:40.9px;top:84.0px" viewBox="0 0 10 10"><rect x="0.5" y="0.5" width="9" height="9" rx="0.8" fill="#f4f6fb" stroke="#c4c8d6" stroke-width="0.8"/><path d="M2.9 7.8L5 2.4l2.1 5.4M3.7 6h2.6" fill="none" stroke="#8a90a4" stroke-width="0.9"/></svg><span class="ti" style="color:#444;left:52.4px;top:85.6px">Etichetta5</span><svg class="tic" style="left:40.9px;top:100.9px" viewBox="0 0 10 10"><rect x="0.5" y="0.5" width="9" height="9" rx="0.8" fill="#f4f6fb" stroke="#c4c8d6" stroke-width="0.8"/><path d="M2.9 7.8L5 2.4l2.1 5.4M3.7 6h2.6" fill="none" stroke="#8a90a4" stroke-width="0.9"/></svg><span class="ti" style="color:#444;left:52.4px;top:102.5px">Etichetta6</span><svg class="tic" style="left:40.9px;top:117.5px" viewBox="0 0 10 10"><rect x="0.5" y="0.5" width="9" height="9" rx="0.8" fill="#f4f6fb" stroke="#c4c8d6" stroke-width="0.8"/><path d="M2.9 7.8L5 2.4l2.1 5.4M3.7 6h2.6" fill="none" stroke="#8a90a4" stroke-width="0.9"/></svg><span class="ti" style="color:#444;left:52.4px;top:119.1px">Etichetta7</span><svg class="tic" style="left:40.9px;top:134.3px" viewBox="0 0 10 10"><rect x="0.5" y="0.5" width="9" height="9" rx="0.8" fill="#f4f6fb" stroke="#c4c8d6" stroke-width="0.8"/><path d="M2.9 7.8L5 2.4l2.1 5.4M3.7 6h2.6" fill="none" stroke="#8a90a4" stroke-width="0.9"/></svg><span class="ti" style="color:#444;left:52.4px;top:135.9px">Etichetta8</span><svg class="tic" style="left:40.9px;top:150.8px" viewBox="0 0 10 10"><rect x="0.5" y="0.5" width="9" height="9" rx="0.8" fill="#f4f6fb" stroke="#c4c8d6" stroke-width="0.8"/><path d="M2.9 7.8L5 2.4l2.1 5.4M3.7 6h2.6" fill="none" stroke="#8a90a4" stroke-width="0.9"/></svg><span class="ti" style="color:#444;left:52.4px;top:152.4px">ALT</span><svg class="tic" style="left:40.9px;top:167.2px" viewBox="0 0 10 10"><rect x="0.5" y="0.5" width="9" height="9" rx="0.8" fill="#f4f6fb" stroke="#c4c8d6" stroke-width="0.8"/><path d="M2.9 7.8L5 2.4l2.1 5.4M3.7 6h2.6" fill="none" stroke="#8a90a4" stroke-width="0.9"/></svg><span class="ti" style="color:#444;left:52.4px;top:168.8px">POR</span><svg class="tic" style="left:40.9px;top:184.1px" viewBox="0 0 10 10"><rect x="0.5" y="0.5" width="9" height="9" rx="0.8" fill="#f4f6fb" stroke="#c4c8d6" stroke-width="0.8"/><path d="M2.9 7.8L5 2.4l2.1 5.4M3.7 6h2.6" fill="none" stroke="#8a90a4" stroke-width="0.9"/></svg><span class="ti" style="color:#444;left:52.4px;top:185.7px">COR</span><svg class="tic" style="left:40.9px;top:200.6px" viewBox="0 0 10 10"><rect x="0.5" y="0.5" width="9" height="9" rx="0.8" fill="#f4f6fb" stroke="#c4c8d6" stroke-width="0.8"/><path d="M2.9 7.8L5 2.4l2.1 5.4M3.7 6h2.6" fill="none" stroke="#8a90a4" stroke-width="0.9"/></svg><span class="ti" style="color:#444;left:52.4px;top:202.2px">FOG</span><svg class="tic" style="left:40.9px;top:217.2px" viewBox="0 0 10 10"><rect x="0.5" y="0.5" width="9" height="9" rx="0.8" fill="#f4f6fb" stroke="#c4c8d6" stroke-width="0.8"/><path d="M2.9 7.8L5 2.4l2.1 5.4M3.7 6h2.6" fill="none" stroke="#8a90a4" stroke-width="0.9"/></svg><span class="ti" style="color:#444;left:52.4px;top:218.8px">FIO</span><svg class="tic" style="left:40.9px;top:234.1px" viewBox="0 0 10 10"><rect x="0.5" y="0.5" width="9" height="9" rx="0.8" fill="#f4f6fb" stroke="#c4c8d6" stroke-width="0.8"/><path d="M2.9 7.8L5 2.4l2.1 5.4M3.7 6h2.6" fill="none" stroke="#8a90a4" stroke-width="0.9"/></svg><span class="ti" style="color:#444;left:52.4px;top:235.7px">FRU</span><div class="a" style="left:117.2px;top:0;width:8.4px;height:239px;background:#c2c2c2"></div><div class="a" style="left:117.2px;top:239px;width:8.4px;height:10px;background:#f0f0f0"></div><div class="a" style="left:119.4px;top:242.4px;border:2px solid transparent;border-top:2.6px solid #7a7a7a"></div><div class="a" style="left:5px;top:249.6px;width:112px;height:8.6px;background:#f0f0f0"></div><div class="a" style="left:13.9px;top:249.8px;width:80.6px;height:8.2px;background:#c2c2c2"></div><div class="a" style="left:5.6px;top:251.8px;border:2px solid transparent;border-right:2.6px solid #7a7a7a"></div><div class="a" style="left:110px;top:251.8px;border:2px solid transparent;border-left:2.6px solid #222"></div><div class="a" style="left:117.2px;top:249.6px;width:8.4px;height:8.6px;background:#dcdcdc"></div><div class="btn" style="left:27.6px;top:263.7px;width:39.4px">Rinomina</div><div class="btn" style="left:70.4px;top:263.7px;width:32.4px">Elimina</div></div>
      <div id="med" class="a"><div class="hd">Multimediale</div><svg class="tic" style="left:20.8px;top:23.8px" viewBox="0 0 10 10"><rect x="0.5" y="0.9" width="9" height="8.2" rx="0.8" fill="#555" stroke="#333" stroke-width="0.8"/><path d="M1.6 7.8l2.4-3 1.6 1.8 1.2-1.2 1.6 2.4z" fill="#e8e8e8"/><circle cx="6.8" cy="3.4" r="0.9" fill="#e8e8e8"/></svg><span class="ti" style="left:32.8px;top:25.8px;font-size:7.05px">logoSENZABORDO.png</span><svg class="tic" style="left:20.8px;top:41.1px" viewBox="0 0 10 10"><rect x="0.5" y="0.9" width="9" height="8.2" rx="0.8" fill="#555" stroke="#333" stroke-width="0.8"/><path d="M1.6 7.8l2.4-3 1.6 1.8 1.2-1.2 1.6 2.4z" fill="#e8e8e8"/><circle cx="6.8" cy="3.4" r="0.9" fill="#e8e8e8"/></svg><span class="ti" style="left:32.8px;top:43.1px">magnolia...verde.JPG</span><div class="btn" style="left:41.3px;top:55.5px;width:47.8px">Carica File...</div></div>
      <div id="prp" class="a"><div class="cb" style="top:-1.2px"></div><span class="pl" style="left:19px;top:-3px">Nessuno</span><span class="pl" style="top:13.2px">Grassetto</span><div class="cb" style="top:26.1px"></div><span class="pl" style="top:40.8px">Corsivo</span><div class="cb" style="top:53.7px"></div><span class="pl" style="top:69px">DimensioneTesto</span><div class="tb" style="top:79.8px">14.0</div><span class="pl" style="top:103.2px">CarattereTipografico</span><div class="sl" style="top:114px">predefinito</div><span class="pl" style="top:132.4px">HTMLFormat</span><div class="cb" style="top:144.9px"></div><span class="pl" style="top:159.9px">Margini</span><div class="cb on" style="top:172.7px"></div><span class="pl" style="top:188px">Altezza</span><div class="tb" style="top:198.9px">Automatico...</div><span class="pl" style="top:221.5px">Larghezza</span><div class="tb" style="top:232.7px">Automatico...</div><span class="pl" style="top:255.9px">Testo</span><div class="tb" style="top:267.2px;width:77px;height:15.6px;border-radius:2px;font-family:'Liberation Mono',monospace;font-size:5.7px;padding-left:2.4px;letter-spacing:-0.05px">Testo per Etichetta9</div><svg class="a" style="left:79px;top:277.6px" width="5" height="5" viewBox="0 0 5 5"><path d="M0.6 4.6l4-4M2.6 4.6l2-2" stroke="#8a8a8a" stroke-width="0.6"/></svg><span class="pl" style="top:291px">AllineamentoTesto</span><div class="sl" style="top:301.6px">sinistra : 0</div><span class="pl" style="top:320.7px">ColoreTesto</span><div class="a" style="left:8.4px;top:332.3px;width:7px;height:9.2px;background:#0a0a0a"></div><span class="pl" style="left:20.6px;top:331.7px">Predefinito</span><span class="pl" style="top:348.2px">Visibile</span><div class="cb on" style="top:360.8px"></div></div>
      <div id="vsb" class="a"><div class="a" style="left:0.6px;top:81px;width:8.4px;height:228px;background:#c1c1c1"></div><div class="a" style="left:2.2px;top:5px;border:2.4px solid transparent;border-bottom:3px solid #3a3a3a;border-top:none"></div><div class="a" style="left:2.4px;top:399px;border:2.2px solid transparent;border-top:2.8px solid #505050;border-bottom:none"></div></div>
    </div>
    
    <div class="a" style="left:249px;top:417px;width:343px;height:26.4px;background:#fff;border:1px solid #d9d9d9;border-radius:2px;box-shadow:0 1px 3px rgba(0,0,0,.22)">
      <div class="a" style="left:6.4px;top:8.6px;width:1.4px;height:8px;background:#d2d2d2"></div><div class="a" style="left:9.4px;top:8.6px;width:1.4px;height:8px;background:#d2d2d2"></div>
      <div class="a" style="left:16px;top:7.6px;font-size:7.44px;line-height:10px;color:#3c3c3c;white-space:nowrap">teams.microsoft.com sta condividendo il tuo schermo.</div>
      <div class="a" style="left:198.4px;top:2.6px;width:99.6px;height:19.6px;background:#1a73e8;border-radius:2.4px;font-size:7px;font-weight:bold;line-height:19.6px;text-align:center;color:#fff;white-space:nowrap">Interrompi condivisione</div>
      <div class="a" style="left:304.8px;top:7.6px;font-size:7.3px;line-height:10px;color:#2f7de0;white-space:nowrap">Nascondi</div>
    </div>
    
    <div id="tsk" class="a" style="left:0;top:448.8px;width:841px;height:24.6px;background:linear-gradient(90deg,#1f2f3c,#1e2e3e 60%,#1c2b42);overflow:hidden">
      <svg class="a" style="left:0;top:0" width="841" height="24.6" viewBox="27 537.8 841 24.6" fill="none">
        <!-- start + search hidden under name tag -->
        <g fill="#8fa0ad" opacity=".5"><rect x="36" y="545.6" width="4" height="4"/><rect x="40.8" y="545.6" width="4" height="4"/><rect x="36" y="550.4" width="4" height="4"/><rect x="40.8" y="550.4" width="4" height="4"/></g>
        <circle cx="70" cy="549" r="3.2" stroke="#8fa0ad" stroke-width="1" opacity=".6"/><path d="M72.2 551.4l2.6 2.8" stroke="#8fa0ad" stroke-width="1" opacity=".6"/>
        <circle cx="100.800" cy="550.200" r="4.600" stroke="#f2f2f2" stroke-width="1.600"/>
        <!-- edge -->
        <circle cx="132" cy="550" r="7.900" fill="#1a7fd6"/>
        <path d="M130.600 542.200a7.900 7.900 0 0 1 9.300 8c0 2.500-1.900 3.700-3.900 3.700-1.700 0-2.800-.600-2.800-1.500 0-.700.900-1.100.9-2.300 0-1.700-1.700-3.100-4.400-3.100-1.300 0-2.500.200-3.500.600.700-2.400 2.300-4.400 4.400-5.400z" fill="#43cf86"/>
        <path d="M136.500 545.200a7.900 7.900 0 0 1 3.400 5c0 2.500-1.900 3.700-3.900 3.700-1.700 0-2.800-.600-2.800-1.500 0-.700.900-1.100.9-2.300 0-1.500-1.300-2.800-3.500-3.050z" fill="#2db8c0" opacity=".8"/>
        <path d="M129.300 552.800c0-2 1.400-3.500 3.100-3.900-3.600-.700-6.900 1.500-6.900 5.100 0 1.300.400 2.500 1.100 3.500 1.800 1 5 1 7.200-.300-2.800-.400-4.500-2.300-4.500-4.400z" fill="#0d4a9a"/>
        <!-- notepad-like -->
        <rect x="155" y="543" width="14" height="14.400" rx="0.800" fill="#8fa3b3"/>
        <path d="M155 543h14v4.200h-14z" fill="#dbe4ea"/>
        <path d="M155.400 546.600l13.200-3" stroke="#6d8192" stroke-width="1.100"/>
        <rect x="158.600" y="549" width="7.800" height="6.800" fill="#b4c8dc"/>
        <path d="M159.600 550.800h5.800M159.600 552.600h5.800M159.600 554.400h4" stroke="#5a7086" stroke-width="0.800"/>
        <!-- orange circle -->
        <circle cx="192.700" cy="550.200" r="7.100" fill="#ef8a20"/>
        <circle cx="192.700" cy="550.200" r="3.800" stroke="#ffe6c2" stroke-width="1.700"/>
        <circle cx="192.700" cy="550.200" r="1.300" fill="#ffe6c2"/>
        <path d="M192.700 544.400v2.200M192.700 553.800v2.200M186.900 550.200h2.200M196.300 550.200h2.200" stroke="#ffe6c2" stroke-width="1.200"/>
        <!-- explorer -->
        <path d="M216.4 545.2h4.6l1.2 1.4h6.4v9.2h-12.2z" fill="#f3c53c"/>
        <rect x="216.4" y="548.2" width="12.2" height="7.6" fill="#fbdc6a"/>
        <rect x="219.4" y="551.6" width="6.2" height="4.2" fill="#3d8ed8"/>
        <rect x="210.6" y="560.6" width="24" height="1.6" fill="#7fb6e4"/>
        <!-- chrome -->
        <circle cx="252.8" cy="550.2" r="6.8" fill="#e54335"/>
        <path d="M252.8 550.2l-5.9 3.4a6.8 6.8 0 0 0 5.9 3.4l3.2-5.6z" fill="#34a853"/>
        <path d="M252.8 550.2h6.8a6.8 6.8 0 0 1-3.6 6l-3.2.8z" fill="#fbbc05"/>
        <path d="M246.9 553.6a6.8 6.8 0 0 0 5.9 3.4l2.6-4.5-3.6-4.3z" fill="#34a853"/>
        <path d="M259 547.4a6.8 6.8 0 0 1-3.6 9.1l-.2-7.4z" fill="#fbbc05"/>
        <circle cx="252.8" cy="550.2" r="3.1" fill="#fff"/><circle cx="252.8" cy="550.2" r="2.4" fill="#4285f4"/>
        <rect x="240.8" y="560.6" width="24" height="1.6" fill="#7fb6e4"/>
        <!-- chrome active w/ avatar -->
        <rect x="268.4" y="537.8" width="29" height="24.6" fill="#3b4a56"/>
        <circle cx="283" cy="549.8" r="6.6" fill="#e54335"/>
        <path d="M283 549.8l-5.7 3.3a6.6 6.6 0 0 0 7.7 3z" fill="#34a853"/>
        <path d="M289.2 547.6a6.6 6.6 0 0 1-4.2 8.5l-.4-7.6z" fill="#fbbc05"/>
        <circle cx="283" cy="549.8" r="3" fill="#fff"/><circle cx="283" cy="549.8" r="2.3" fill="#4285f4"/>
        <circle cx="286.6" cy="553.2" r="4.2" fill="#6a5148"/><circle cx="286.2" cy="552.4" r="2" fill="#d8b4a0"/><path d="M283.4 555.8a3.4 3.4 0 0 1 6.4-.6 4.2 4.2 0 0 1-6.4.6z" fill="#c06a74"/>
        <rect x="268.4" y="560.6" width="29" height="1.6" fill="#8cc0ea"/>
        <!-- acrobat -->
        <rect x="307" y="543.8" width="13" height="13" rx="2.2" fill="#b30b00"/>
        <path d="M310 554c1.6-1.4 3-4.4 3.2-6.8.1-1.2 1.2-1 1 .2-.4 2.6 1.2 5 3.8 5.2.9.1.9.9 0 .9-2.6 0-5.600.4-7.200 1.400-.7.500-1.400-.100-.800-.900z" fill="#fff"/>
        <rect x="302" y="560.6" width="23.8" height="1.6" fill="#7fb6e4"/>
        <!-- tray -->
        <rect x="693.6" y="544" width="4.4" height="8" rx="2.2" fill="#eee"/><path d="M691.6 550.200a4.200 4.200 0 0 0 8.400 0M695.800 554.400v2" stroke="#eee" stroke-width="1"/>
        <path d="M708.4 555.4a3 3 0 0 1 3-3M708.400 552.600a6 6 0 0 1 5.800-5.600M714.600 550.600l1.600 3.800" stroke="#9aa8b4" stroke-width="1"/><circle cx="714.2" cy="555" r="1" fill="#9aa8b4"/>
        <path d="M721.200 545.600l4.600 2.400 4.200-3-2.400 4.600 3 4.200-4.600-2.400-4.200 3 2.400-4.600z" fill="#f28a1e"/>
        <rect x="735.800" y="546.400" width="10" height="6.800" rx="1" stroke="#e4e4e4" stroke-width="1"/><rect x="746" y="548.400" width="1.400" height="2.800" fill="#e4e4e4"/><path d="M738.600 548.200v3.200M741 548.200l-1.400 3.200" stroke="#e4e4e4" stroke-width="0.800"/>
        <path d="M755.400 544.400l5 1.600v3.600c0 3-2.200 5-5 6-2.800-1-5-3-5-6v-3.600z" fill="#f2f2f2"/><path d="M755.400 544.400v11.200M750.400 549.600h10" stroke="#1e2e3c" stroke-width="0.900"/><circle cx="758.600" cy="554.200" r="2.300" fill="#22a04a"/>
        <path d="M765.600 548.200h2l2.800-2.600v9.200l-2.800-2.600h-2z" fill="#e8e8e8"/><path d="M772 547.600a3.600 3.600 0 0 1 0 5.200M773.800 545.800a6 6 0 0 1 0 8.800" stroke="#e8e8e8" stroke-width="0.900"/>
        <rect x="780.400" y="544.800" width="10" height="10.400" rx="2.200" fill="#d6222c"/><path d="M786.800 546.400c-3.600 1-4.800 5.600-2.200 7.200 2.600 1.400 5-1.800 3-4.200" stroke="#fff" stroke-width="1.100"/>
        <path d="M843.400 545.400h10v7.200h-3.600l-2 2.200v-2.200h-4.400z" stroke="#f0f0f0" stroke-width="1.050"/>
      </svg>
      <div class="a" style="left:770px;top:2.4px;width:36px;text-align:center;font-size:7.3px;line-height:10px;color:#f2f2f2">16:19</div>
      <div class="a" style="left:768px;top:12.8px;width:40px;text-align:center;font-size:7.3px;line-height:10px;color:#f2f2f2">09/11/2020</div>
    </div>
  </div>
  <div class="a" style="left:368px;top:107px;width:160px;height:24.2px;background:#262626;border-radius:3.4px;box-shadow:0 1px 3px rgba(0,0,0,.4)"><div class="a" style="left:0;top:5.1px;width:160px;text-align:center;font-size:12.72px;line-height:15px;color:#fafafa;white-space:nowrap;-webkit-text-stroke:0.35px #fafafa">Il microfono è disattivato.</div></div>
  <svg class="a" style="left:523.6px;top:354.6px" width="11" height="14" viewBox="-1.2 -1.2 11 14"><path d="M0 0v10.2l2.500-2.300 1.800 4 1.700-.800-1.800-3.800h3.400z" fill="#fdfdfd" stroke="#6e6e6e" stroke-width="1" stroke-linejoin="round"/></svg>
  <!--BOTTOM2-->
  <div class="a" style="left:0;top:562.4px;width:900px;height:5px;background:#141414"></div>
  <div class="a" style="left:273px;top:562.4px;width:159px;height:5px;background:#26232b"></div>
  <div class="a" style="left:432px;top:562.4px;width:160px;height:5px;background:linear-gradient(90deg,#b4b2a6,#b8b6aa 38%,#6a675f 45%,#8a877d 48%,#b2b0a4 54%,#aeaca0)"></div>
  <div class="a" style="left:592px;top:562.4px;width:161px;height:5px;background:#3a3838"></div>
  <div class="a" style="left:753px;top:562.4px;width:147px;height:5px;background:linear-gradient(90deg,#070606,#0a0808 10%,#4a2a1c 28%,#7a4a32 50%,#5a3424 66%,#2a1a16 80%,#1a1614 88%,#7a828c 95%)"></div>
  <div class="a" style="left:0;top:536px;width:76px;height:19.4px;background:rgba(38,38,38,.86);border-radius:0 2.4px 2.4px 0"></div>
  <div class="a" style="left:-3.4px;top:539.6px;font-size:10.3px;line-height:14px;color:#fff;white-space:nowrap">Basso Antonella</div>
</div>
</body>
</html>
